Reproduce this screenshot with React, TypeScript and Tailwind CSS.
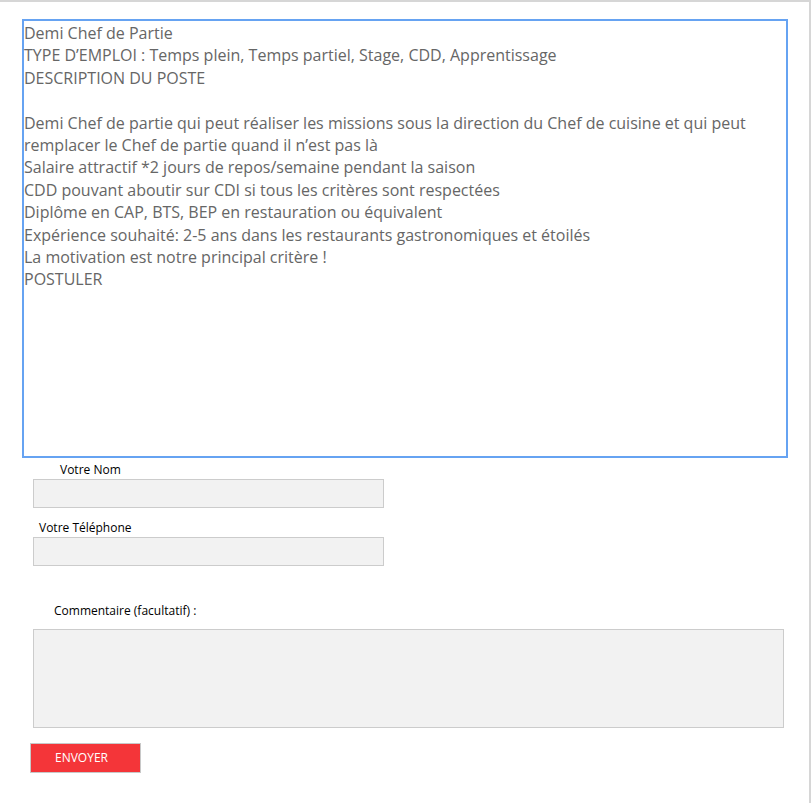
const lines = [
  'Demi Chef de Partie',
  'TYPE D’EMPLOI : Temps plein, Temps partiel, Stage, CDD, Apprentissage',
  'DESCRIPTION DU POSTE',
];

const details = [
  'Salaire attractif *2 jours de repos/semaine pendant la saison',
  'CDD pouvant aboutir sur CDI si tous les critères sont respectées',
  'Diplôme en CAP, BTS, BEP en restauration ou équivalent',
  'Expérience souhaité: 2-5 ans dans les restaurants gastronomiques et étoilés',
  'La motivation est notre principal critère !',
  'POSTULER',
];

const App = () => {
  return (
    <div className="w-[811px] h-[803px] bg-white border-t-2 border-r-2 border-[#d6d6d6] font-['Open_Sans',sans-serif]">
      {/* Job description */}
      <div className="ml-[22px] mt-[17px] w-[766px] h-[439px] border-2 border-[#66a3f2] pt-[1px] text-[16px] leading-[22.4px] text-[#666666]">
        {lines.map((l) => (
          <div key={l}>{l}</div>
        ))}
        <div className="h-[22.4px]" />
        <div className="pr-[4px]">
          Demi Chef de partie qui peut réaliser les missions sous la direction du Chef de cuisine et qui peut remplacer le Chef de partie quand il n’est pas là
        </div>
        {details.map((l) => (
          <div key={l}>{l}</div>
        ))}
      </div>

      {/* Form */}
      <form className="pl-[33px] text-[12px] text-black">
        <label className="block pl-[27px] pt-[4px] leading-[16px]">Votre Nom</label>
        <input
          type="text"
          className="mt-[1px] block w-[351px] h-[29px] bg-[#f2f2f2] border border-[#cccccc] outline-none"
        />
        <label className="block pl-[6px] pt-[12px] leading-[16px]">Votre Téléphone</label>
        <input
          type="tel"
          className="mt-[1px] block w-[351px] h-[29px] bg-[#f2f2f2] border border-[#cccccc] outline-none"
        />
        <label className="block pl-[21px] pt-[37px] leading-[16px]">Commentaire (facultatif) :</label>
        <textarea className="mt-[10px] block w-[751px] h-[99px] bg-[#f2f2f2] border border-[#cccccc] outline-none resize-none" />
        <button
          type="button"
          className="mt-[15px] -ml-[3px] block w-[111px] h-[30px] bg-[#f43539] border border-[#c8c8c8] text-white text-[12px] text-left pl-[24px]"
        >
          ENVOYER
        </button>
      </form>
    </div>
  );
};

export default App;
